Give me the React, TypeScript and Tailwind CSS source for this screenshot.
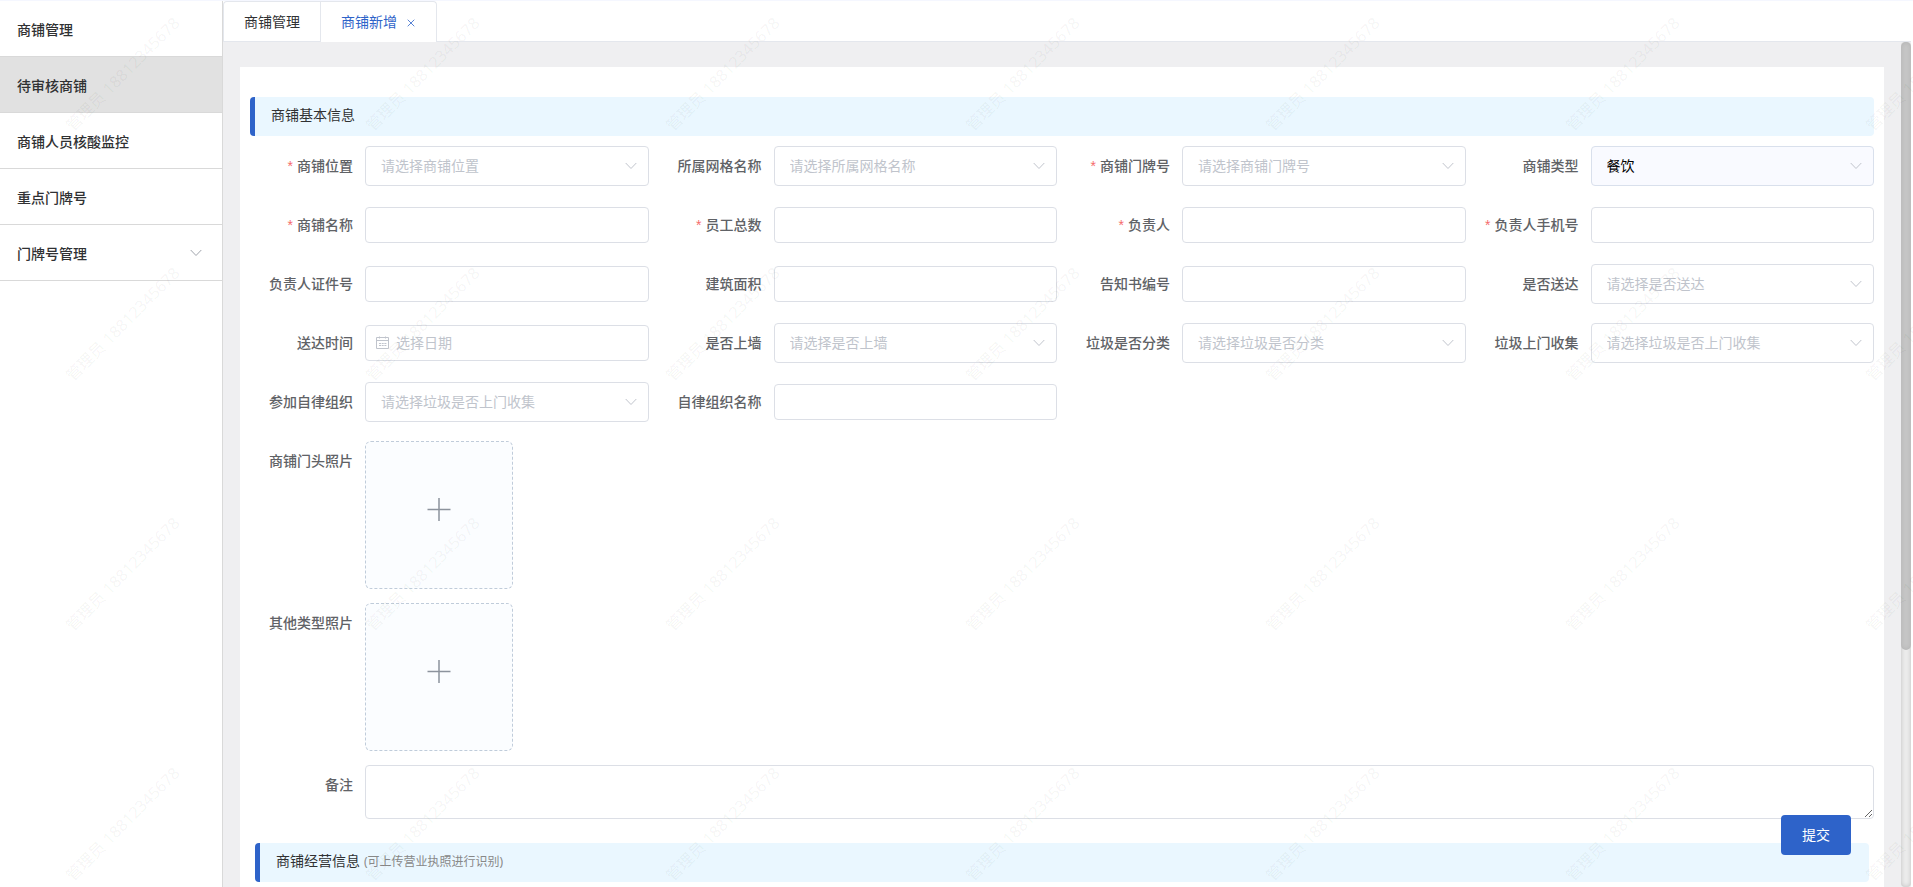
import clsx from 'clsx';

type Field = {
  id: string;
  label: string;
  type: 'input' | 'select' | 'date';
  required?: boolean;
  placeholder?: string;
  value?: string;
};

const menus = [
  { title: '商铺管理' },
  { title: '待审核商铺', active: true },
  { title: '商铺人员核酸监控' },
  { title: '重点门牌号' },
  { title: '门牌号管理', children: true },
];

const fields: Field[] = [
  { id: 'position', label: '商铺位置', type: 'select', required: true, placeholder: '请选择商铺位置' },
  { id: 'grid', label: '所属网格名称', type: 'select', placeholder: '请选择所属网格名称' },
  { id: 'doorNo', label: '商铺门牌号', type: 'select', required: true, placeholder: '请选择商铺门牌号' },
  { id: 'shopType', label: '商铺类型', type: 'select', value: '餐饮' },
  { id: 'shopName', label: '商铺名称', type: 'input', required: true },
  { id: 'staff', label: '员工总数', type: 'input', required: true },
  { id: 'leader', label: '负责人', type: 'input', required: true },
  { id: 'phone', label: '负责人手机号', type: 'input', required: true },
  { id: 'idCard', label: '负责人证件号', type: 'input' },
  { id: 'area', label: '建筑面积', type: 'input' },
  { id: 'noticeNo', label: '告知书编号', type: 'input' },
  { id: 'delivered', label: '是否送达', type: 'select', placeholder: '请选择是否送达' },
  { id: 'deliverTime', label: '送达时间', type: 'date', placeholder: '选择日期' },
  { id: 'onWall', label: '是否上墙', type: 'select', placeholder: '请选择是否上墙' },
  { id: 'sorting', label: '垃圾是否分类', type: 'select', placeholder: '请选择垃圾是否分类' },
  { id: 'collect', label: '垃圾上门收集', type: 'select', placeholder: '请选择垃圾是否上门收集' },
  { id: 'joined', label: '参加自律组织', type: 'select', placeholder: '请选择垃圾是否上门收集' },
  { id: 'orgName', label: '自律组织名称', type: 'input' },
];

function ArrowDown({ className }: { className?: string }) {
  return (
    <svg className={className} width="12" height="8" viewBox="0 0 12 8" fill="none" stroke="currentColor">
      <path d="M0.7 1 L6 6.5 L11.3 1" />
    </svg>
  );
}

function CalendarIcon({ className }: { className?: string }) {
  return (
    <svg className={className} width="14" height="14" viewBox="0 0 14 14" fill="none" stroke="currentColor">
      <path d="M0.5 1.5h12v11h-12z M0.5 4.5h12 M3.5 0.5v2 M9.5 0.5v2" />
      <path d="M3 7.5h2 M5.7 7.5h2 M8.4 7.5h2 M3 9.5h2 M5.7 9.5h2 M8.4 9.5h2" />
    </svg>
  );
}

function Label({ htmlFor, required, children }: { htmlFor: string; required?: boolean; children: string }) {
  return (
    <label
      htmlFor={htmlFor}
      className="w-[125px] shrink-0 pr-3 text-right leading-10 font-medium whitespace-nowrap text-[#606266]"
    >
      {required && <span className="mr-1 font-['Liberation_Sans',sans-serif] font-normal text-[#f56c6c]">*</span>}
      {children}
    </label>
  );
}

function Control({ field }: { field: Field }) {
  if (field.type === 'select') {
    return (
      <div className="relative h-10 min-w-0 flex-1">
        <select
          id={field.id}
          className={clsx(
            'h-full w-full appearance-none rounded border pr-8 pl-[15px] outline-none',
            field.value
              ? 'border-[#d9e0ec] bg-[#f9faff] text-black'
              : 'border-[#dcdfe6] bg-white text-[#c0c4cc]'
          )}
        >
          <option>{field.value ?? field.placeholder}</option>
        </select>
        <ArrowDown className="pointer-events-none absolute top-4 right-3 text-[#c0c4cc]" />
      </div>
    );
  }

  return (
    <div className="relative h-9 min-w-0 flex-1">
      <input
        id={field.id}
        type="text"
        placeholder={field.placeholder}
        className={clsx(
          'h-full w-full rounded border border-[#dcdfe6] bg-white outline-none placeholder:text-[#c0c4cc]',
          field.type === 'date' ? 'pr-[15px] pb-px pl-[30px]' : 'px-[15px]'
        )}
      />
      {field.type === 'date' && (
        <CalendarIcon className="pointer-events-none absolute top-[11px] left-[11px] text-[#c0c4cc]" />
      )}
    </div>
  );
}

function SectionTitle({ title, tip, className }: { title: string; tip?: string; className?: string }) {
  return (
    <h2
      className={clsx(
        'h-[39px] rounded border-l-[5px] border-[#2e63c9] bg-[#eaf7ff] pl-4 leading-9 text-[#303133]',
        className
      )}
    >
      {title}
      {tip && <span className="ml-1 text-xs text-[#888]">{tip}</span>}
    </h2>
  );
}

function Upload({ id, label }: { id: string; label: string }) {
  return (
    <div className="mb-[14px] flex items-start">
      <Label htmlFor={id}>{label}</Label>
      <button
        id={id}
        type="button"
        className="flex h-[148px] w-[148px] items-center justify-center rounded-md border border-dashed border-[#c0ccda] bg-[#fbfdff] pb-2.5 text-[#8c939d]"
      >
        <svg width="24" height="24" viewBox="0 0 24 24" fill="none" stroke="currentColor" strokeWidth="1.5">
          <path d="M0.5 11.5h23 M12 0v23" />
        </svg>
      </button>
    </div>
  );
}

function Sidebar() {
  return (
    <nav className="w-[223px] shrink-0 border-r border-[#d9d9d9] bg-white">
      {menus.map((menu) => (
        <a
          key={menu.title}
          href="#"
          className={clsx(
            'flex h-14 items-center justify-between border-b border-[#d9d9d9] pt-0.5 pr-5 pl-[17px] font-medium text-[#303133]',
            menu.active && 'bg-[#e1e1e1]'
          )}
        >
          {menu.title}
          {menu.children && <ArrowDown className="mb-0.5 text-[#a0a4ac]" />}
        </a>
      ))}
    </nav>
  );
}

function Tabs() {
  return (
    <div className="flex h-[41px] shrink-0 border-b border-[#e4e7ed] bg-white">
      <button type="button" className="h-10 rounded-tl border-t border-l border-[#e4e7ed] px-5 text-[#303133]">
        商铺管理
      </button>
      <div className="flex h-[41px] items-center rounded-tr border-x border-t border-[#e4e7ed] bg-white pr-[19px] pl-5 text-[#2e63c9]">
        <button type="button">商铺新增</button>
        <button type="button" aria-label="关闭" className="ml-2 flex h-3 w-3 items-center justify-center pt-0.5">
          <svg width="8" height="8" viewBox="0 0 8 8" stroke="currentColor" strokeWidth="0.8">
            <path d="M0.7 0.7 L7.3 7.3 M7.3 0.7 L0.7 7.3" />
          </svg>
        </button>
      </div>
    </div>
  );
}

function Watermark() {
  return (
    <div className="pointer-events-none absolute inset-0 z-20 overflow-hidden" aria-hidden="true">
      <div className="grid w-[2100px] grid-cols-7">
        {Array.from({ length: 28 }, (_, i) => (
          <div key={i} className="flex h-[250px] items-start pt-[61px] pl-[46px]">
            <span className="-rotate-45 text-base leading-6 whitespace-nowrap text-black/5">管理员 18812345678</span>
          </div>
        ))}
      </div>
    </div>
  );
}

export default function App() {
  return (
    <div className="relative flex h-screen overflow-hidden border-t border-[#f5f7ff] bg-white font-['Noto_Sans','Noto_Sans_CJK_SC',sans-serif] text-sm">
      <Sidebar />
      <div className="mr-[2px] flex min-w-0 flex-1 flex-col">
        <Tabs />
        <div className="flex min-h-0 flex-1 bg-[#efeff1]">
          <main className="min-w-0 flex-1 overflow-hidden pt-[25px] pr-[17px] pl-[17px]">
            <form id="shopForm" className="bg-white pt-[30px] pr-[10px] pb-10">
              <SectionTitle title="商铺基本信息" className="ml-[10px]" />
              <div className="grid grid-cols-4 gap-y-[19px] py-[10px]">
                {fields.map((field) => (
                  <div key={field.id} className="flex h-10 items-center">
                    <Label htmlFor={field.id} required={field.required}>
                      {field.label}
                    </Label>
                    <Control field={field} />
                  </div>
                ))}
              </div>
              <div className="pt-[9px]">
                <Upload id="doorPhoto" label="商铺门头照片" />
                <Upload id="otherPhoto" label="其他类型照片" />
                <div className="flex items-start">
                  <Label htmlFor="remark">备注</Label>
                  <textarea
                    id="remark"
                    className="h-[54px] min-w-0 flex-1 resize-y rounded border border-[#dcdfe6] px-[15px] py-1 outline-none"
                  />
                </div>
              </div>
              <SectionTitle title="商铺经营信息" tip="(可上传营业执照进行识别)" className="mt-6 mr-[5px] ml-[15px]" />
            </form>
          </main>
          <div className="w-[10px] shrink-0 rounded bg-[#ededed] shadow-[inset_0_0_5px_rgba(0,0,0,0.2)]">
            <div className="h-[72%] rounded-full bg-[#c6c6c6] shadow-[inset_0_0_5px_rgba(0,0,0,0.1)]" />
          </div>
        </div>
      </div>
      <button
        type="submit"
        form="shopForm"
        className="absolute right-[62px] bottom-8 z-10 h-10 w-[70px] rounded bg-[#2e63c9] text-white"
      >
        提交
      </button>
      <Watermark />
    </div>
  );
}
